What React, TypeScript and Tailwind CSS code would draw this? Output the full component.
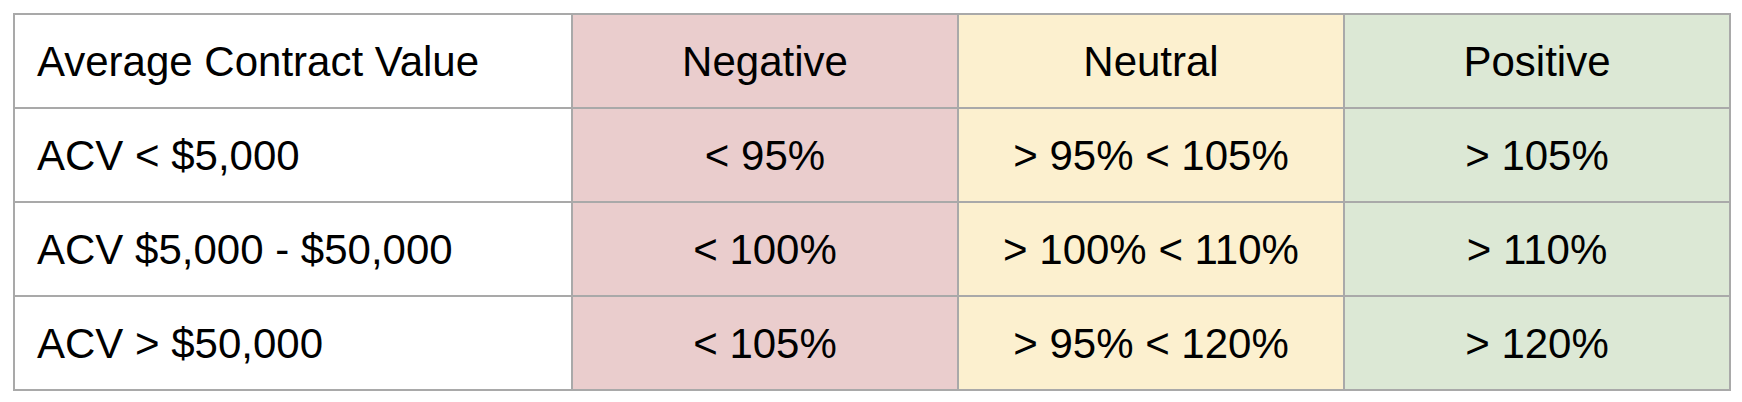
import React from "react";

type Row = {
  label: string;
  negative: string;
  neutral: string;
  positive: string;
};

const rows: Row[] = [
  { label: "Average Contract Value", negative: "Negative", neutral: "Neutral", positive: "Positive" },
  { label: "ACV < $5,000", negative: "< 95%", neutral: "> 95% < 105%", positive: "> 105%" },
  { label: "ACV $5,000 - $50,000", negative: "< 100%", neutral: "> 100% < 110%", positive: "> 110%" },
  { label: "ACV > $50,000", negative: "< 105%", neutral: "> 95% < 120%", positive: "> 120%" },
];

const cell = "h-[94px] border-r-2 border-b-2 border-[#a9a9a9] flex items-center";

const App: React.FC = () => {
  return (
    <div className="w-[1742px] h-[402px] bg-white pl-[13px] pt-[13px] font-['Liberation_Sans',Arial,sans-serif] text-[42px] text-black">
      <div className="inline-grid grid-cols-[558px_386px_386px_386px] border-l-2 border-t-2 border-[#a9a9a9]">
        {rows.map((r) => (
          <React.Fragment key={r.label}>
            <div className={`${cell} bg-white pl-[22px]`}>{r.label}</div>
            <div className={`${cell} bg-[#eacdcd] justify-center`}>{r.negative}</div>
            <div className={`${cell} bg-[#fcf0cf] justify-center`}>{r.neutral}</div>
            <div className={`${cell} bg-[#dce8d5] justify-center`}>{r.positive}</div>
          </React.Fragment>
        ))}
      </div>
    </div>
  );
};

export default App;
